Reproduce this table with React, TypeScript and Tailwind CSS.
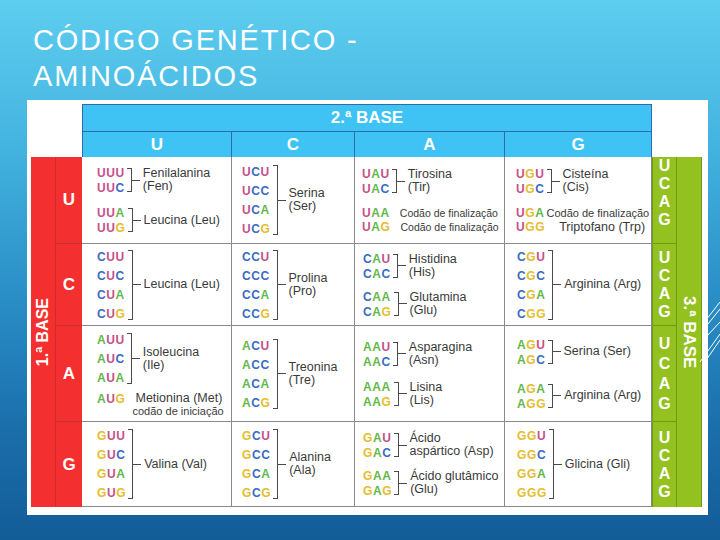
import React from 'react';

const COL: Record<string, string> = {
  U: 'text-[#c6508b]',
  C: 'text-[#3a6bc5]',
  A: 'text-[#63b84b]',
  G: 'text-[#e6bd2c]',
};

function Codon({ c }: { c: string }) {
  return (
    <span className="font-bold text-[12px] tracking-[0.6px] whitespace-nowrap">
      {c.split('').map((ch, i) => (
        <span key={i} className={COL[ch]}>
          {ch}
        </span>
      ))}
    </span>
  );
}

function Group({
  codons,
  children,
  tight = false,
}: {
  codons: string[];
  children: React.ReactNode;
  tight?: boolean;
}) {
  return (
    <div className="flex items-center">
      <div className="flex flex-col">
        {codons.map((c) => (
          <div key={c} className={tight ? 'leading-[14px]' : 'leading-[17px]'}>
            <Codon c={c} />
          </div>
        ))}
      </div>
      <div className="self-stretch my-[3px] ml-[2px] w-[5px] border-y border-r border-[#4a4a4a]" />
      <div className="w-[8px] h-px bg-[#4a4a4a]" />
      <div className="ml-[3px] text-[12.5px] leading-[13px] text-[#3a3a3a] whitespace-nowrap">
        {children}
      </div>
    </div>
  );
}

function Cell({ cls, children }: { cls: string; children?: React.ReactNode }) {
  return (
    <div className={`flex flex-col justify-center border-b border-r border-[#8a8a8a] ${cls}`}>
      {children}
    </div>
  );
}

function RedLetter({ l, last = false }: { l: string; last?: boolean }) {
  return (
    <div
      className={
        last
          ? 'bg-[#f3302f] flex items-center justify-center text-white font-bold text-[17px]'
          : 'bg-[#f3302f] flex items-center justify-center text-white font-bold text-[17px] border-b border-[#c23434]'
      }
    >
      {l}
    </div>
  );
}

function GreenLetters({ gap, cls }: { gap: string; cls: string }) {
  return (
    <div
      className={`bg-[#93c11f] border-x border-[#6f9a12] flex flex-col items-center justify-center text-white font-bold text-[16px] ${cls}`}
    >
      {['U', 'C', 'A', 'G'].map((l) => (
        <div key={l} className={gap}>
          {l}
        </div>
      ))}
    </div>
  );
}

export default function App() {
  return (
    <div className="relative w-[720px] h-[540px] overflow-hidden flex flex-col bg-[linear-gradient(180deg,#5ecdef_0%,#45b6e1_25%,#2a8ec6_55%,#1a6eaa_80%,#135c98_100%)] font-['Liberation_Sans',Arial,sans-serif]">
      <h1 className="pl-[33px] pt-[22px] text-[29px] leading-[36px] tracking-[1.8px] text-white font-normal">
        CÓDIGO GENÉTICO -<br />
        AMINOÁCIDOS
      </h1>

      <div className="ml-[27px] mt-[6px] w-[681px] h-[415px] bg-white pt-[4px] pl-[4px]">
        <div className="grid grid-cols-[25px_26px_150px_123px_150px_147px_25px_25px] grid-rows-[27px_26px_87px_82px_96px_85px]">
          {/* header row 1 */}
          <div className="col-span-2" />
          <div className="col-span-4 bg-[#3ec3f4] border-x border-t border-[#2e6ca6] flex items-center justify-center text-white font-bold text-[17px]">
            2.ª BASE
          </div>
          <div className="col-span-2" />

          {/* header row 2 */}
          <div className="col-span-2" />
          {['U', 'C', 'A', 'G'].map((l, i) => (
            <div
              key={l}
              className={
                i === 0
                  ? 'bg-[#3ec3f4] border-t border-x border-[#2e6ca6] flex items-center justify-center text-white font-bold text-[17px]'
                  : 'bg-[#3ec3f4] border-t border-r border-[#2e6ca6] flex items-center justify-center text-white font-bold text-[17px]'
              }
            >
              {l}
            </div>
          ))}
          <div className="col-span-2" />

          {/* spanning side columns */}
          <div className="col-start-1 row-start-3 row-span-4 bg-[#f3302f] border-r border-[#cf2b2b] flex items-center justify-center">
            <span className="[writing-mode:vertical-rl] rotate-180 text-white font-bold text-[16px] whitespace-nowrap">
              1.ª BASE
            </span>
          </div>
          <div className="col-start-8 row-start-3 row-span-4 bg-[#93c11f] border-r border-[#6f9a12] flex items-center justify-center">
            <span className="[writing-mode:vertical-rl] text-white font-bold text-[17px] whitespace-nowrap">
              3.ª BASE
            </span>
          </div>

          {/* Row U */}
          <RedLetter l="U" />
          <Cell cls="pl-[15px] gap-[10px]">
            <Group codons={['UUU', 'UUC']} tight>
              Fenilalanina
              <br />
              (Fen)
            </Group>
            <Group codons={['UUA', 'UUG']} tight>
              Leucina (Leu)
            </Group>
          </Cell>
          <Cell cls="pl-[10px]">
            <Group codons={['UCU', 'UCC', 'UCA', 'UCG']}>
              Serina
              <br />
              (Ser)
            </Group>
          </Cell>
          <Cell cls="pl-[7px] gap-[10px]">
            <Group codons={['UAU', 'UAC']} tight>
              Tirosina
              <br />
              (Tir)
            </Group>
            <div className="flex flex-col">
              <div className="flex items-center leading-[14px]">
                <Codon c="UAA" />
                <span className="ml-[10px] text-[10.5px] text-[#3a3a3a] whitespace-nowrap">Codão de finalização</span>
              </div>
              <div className="flex items-center leading-[14px]">
                <Codon c="UAG" />
                <span className="ml-[10px] text-[10.5px] text-[#3a3a3a] whitespace-nowrap">Codão de finalização</span>
              </div>
            </div>
          </Cell>
          <Cell cls="pl-[11px] gap-[10px]">
            <Group codons={['UGU', 'UGC']} tight>
              Cisteína
              <br />
              (Cis)
            </Group>
            <div className="flex flex-col">
              <div className="flex items-center leading-[14px]">
                <Codon c="UGA" />
                <span className="ml-[2px] text-[11px] text-[#3a3a3a] whitespace-nowrap">Codão de finalização</span>
              </div>
              <div className="flex items-center leading-[14px]">
                <Codon c="UGG" />
                <span className="ml-[14px] text-[12.5px] text-[#3a3a3a] whitespace-nowrap">Triptofano (Trp)</span>
              </div>
            </div>
          </Cell>
          <GreenLetters gap="leading-[18px]" cls="border-b pb-[14px]" />

          {/* Row C */}
          <RedLetter l="C" />
          <Cell cls="pl-[15px]">
            <Group codons={['CUU', 'CUC', 'CUA', 'CUG']}>Leucina (Leu)</Group>
          </Cell>
          <Cell cls="pl-[10px]">
            <Group codons={['CCU', 'CCC', 'CCA', 'CCG']}>
              Prolina
              <br />
              (Pro)
            </Group>
          </Cell>
          <Cell cls="pl-[8px] gap-[8px]">
            <Group codons={['CAU', 'CAC']} tight>
              Histidina
              <br />
              (His)
            </Group>
            <Group codons={['CAA', 'CAG']} tight>
              Glutamina
              <br />
              (Glu)
            </Group>
          </Cell>
          <Cell cls="pl-[12px]">
            <Group codons={['CGU', 'CGC', 'CGA', 'CGG']}>Arginina (Arg)</Group>
          </Cell>
          <GreenLetters gap="leading-[18px]" cls="border-b" />

          {/* Row A */}
          <RedLetter l="A" />
          <Cell cls="pl-[15px] gap-[4px]">
            <Group codons={['AUU', 'AUC', 'AUA']}>
              Isoleucina
              <br />
              (Ile)
            </Group>
            <div className="flex items-start">
              <div className="leading-[14px]">
                <Codon c="AUG" />
              </div>
              <div className="ml-[10px] flex flex-col text-[#3a3a3a] whitespace-nowrap">
                <span className="text-[12.5px] leading-[14px]">Metionina (Met)</span>
                <span className="-ml-[3px] text-[11px] leading-[12px]">codão de iniciação</span>
              </div>
            </div>
          </Cell>
          <Cell cls="pl-[10px]">
            <Group codons={['ACU', 'ACC', 'ACA', 'ACG']}>
              Treonina
              <br />
              (Tre)
            </Group>
          </Cell>
          <Cell cls="pl-[8px] gap-[10px]">
            <Group codons={['AAU', 'AAC']} tight>
              Asparagina
              <br />
              (Asn)
            </Group>
            <Group codons={['AAA', 'AAG']} tight>
              Lisina
              <br />
              (Lis)
            </Group>
          </Cell>
          <Cell cls="pl-[12px] gap-[14px]">
            <Group codons={['AGU', 'AGC']} tight>
              Serina (Ser)
            </Group>
            <Group codons={['AGA', 'AGG']} tight>
              Arginina (Arg)
            </Group>
          </Cell>
          <GreenLetters gap="leading-[20px]" cls="border-b" />

          {/* Row G */}
          <RedLetter l="G" last />
          <Cell cls="pl-[15px]">
            <Group codons={['GUU', 'GUC', 'GUA', 'GUG']}>Valina (Val)</Group>
          </Cell>
          <Cell cls="pl-[10px]">
            <Group codons={['GCU', 'GCC', 'GCA', 'GCG']}>
              Alanina
              <br />
              (Ala)
            </Group>
          </Cell>
          <Cell cls="pl-[8px] gap-[8px]">
            <Group codons={['GAU', 'GAC']} tight>
              Ácido
              <br />
              aspártico (Asp)
            </Group>
            <Group codons={['GAA', 'GAG']} tight>
              Ácido glutâmico
              <br />
              (Glu)
            </Group>
          </Cell>
          <Cell cls="pl-[12px]">
            <Group codons={['GGU', 'GGC', 'GGA', 'GGG']}>Glicina (Gli)</Group>
          </Cell>
          <GreenLetters gap="leading-[18px]" cls="" />
        </div>
      </div>

      <svg
        className="absolute left-[698px] top-[290px]"
        width="22"
        height="90"
        viewBox="0 0 22 90"
        fill="none"
        stroke="white"
        strokeWidth="1"
      >
        <line x1="8" y1="30" x2="22" y2="12" />
        <line x1="10" y1="34" x2="22" y2="19" />
        <line x1="9" y1="46" x2="22" y2="32" />
        <line x1="2" y1="72" x2="22" y2="44" />
        <line x1="4" y1="76" x2="22" y2="50" />
      </svg>
    </div>
  );
}
